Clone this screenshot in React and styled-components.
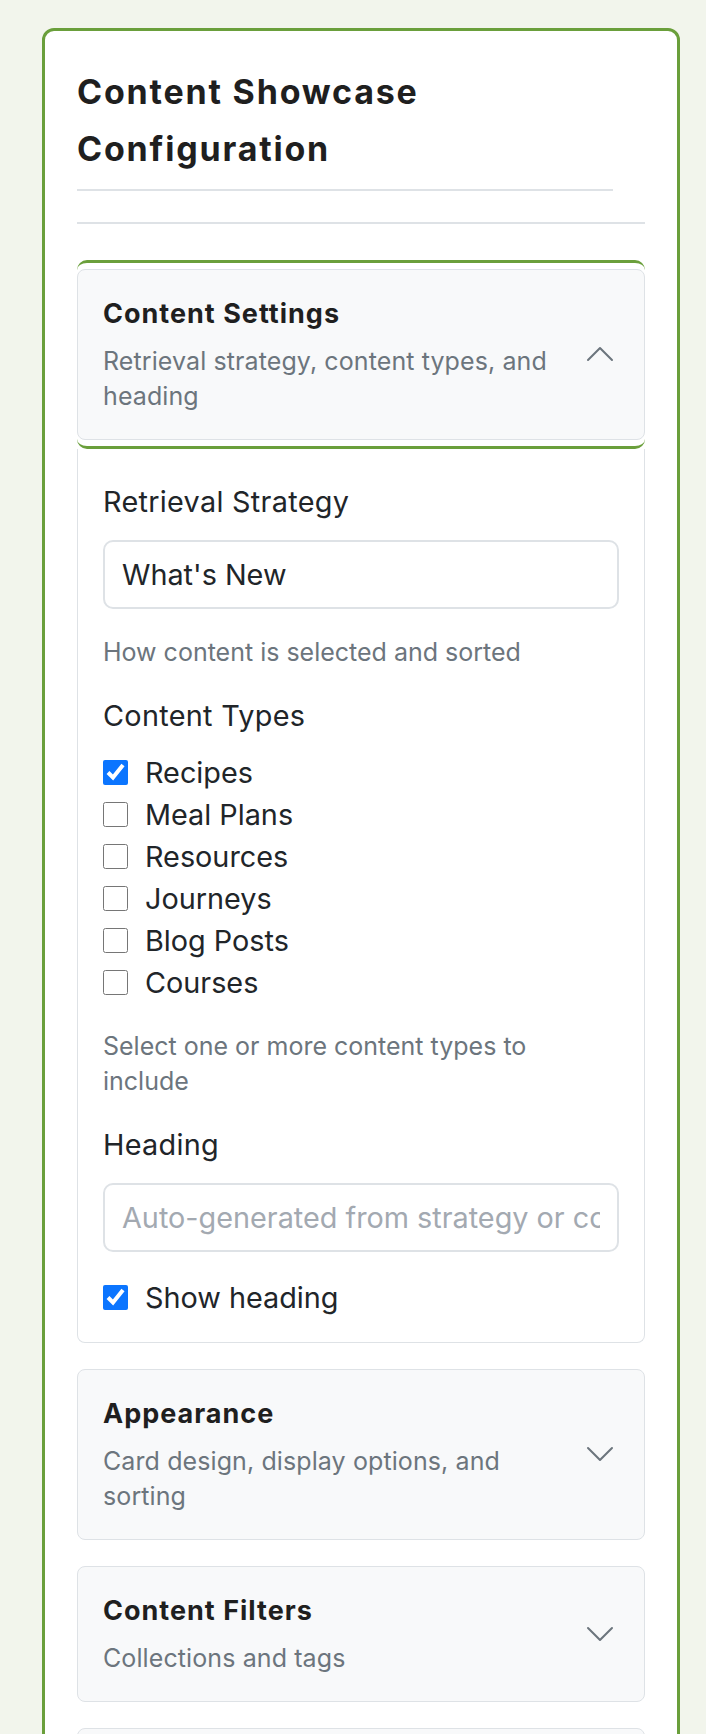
import React from 'react';
import styled, { createGlobalStyle } from 'styled-components';
import { BsChevronDown, BsChevronUp } from 'react-icons/bs';

const GlobalStyle = createGlobalStyle`
    html, body {
        margin: 0;
        padding: 0;
        background: #f2f5ec;
    }

    body {
        font-family: Inter, "Open Sans", sans-serif;
        color: #212529;
    }
`;

const Page = styled.div`
    padding: 28px 26px 40px 42px;
`;

const Card = styled.section`
    background: #fff;
    border: 3px solid #6a9f3b;
    border-radius: 12px;
    padding: 32px;
`;

const Header = styled.header`
    margin-right: 32px;
    padding-bottom: 12px;
    border-bottom: 2px solid #dee2e6;
`;

const Title = styled.h2`
    margin: 0;
    font-size: 34px;
    line-height: 57px;
    font-weight: 700;
    letter-spacing: 1.8px;
    color: #1f1f1f;
`;

const Rule = styled.hr`
    margin: 31px 0 36px;
    border: 0;
    border-top: 2px solid #dee2e6;
`;

const Stack = styled.div`
    display: flex;
    flex-direction: column;
    gap: 26px;
`;

const Ring = styled.div`
    padding: 6px 0;
    border-top: 3px solid #6a9f3b;
    border-bottom: 3px solid #6a9f3b;
    border-radius: 10px;
`;

const Toggle = styled.button`
    display: flex;
    align-items: center;
    gap: 20px;
    width: 100%;
    box-sizing: border-box;
    padding: 24px 28px 25px 25px;
    background: #f8f9fa;
    border: 1px solid #dee2e6;
    border-radius: 8px;
    text-align: left;
    font-family: inherit;
    color: #6c757d;
    cursor: pointer;
`;

const ToggleText = styled.div`
    flex: 1;
`;

const ToggleTitle = styled.div`
    font-size: 27px;
    line-height: 40px;
    font-weight: 700;
    letter-spacing: 1px;
    color: #1f1f1f;
    margin-bottom: 10px;
`;

const ToggleSub = styled.div`
    font-size: 25px;
    line-height: 35px;
    letter-spacing: 0.1px;
    color: #6c757d;
`;

const Panel = styled.div`
    display: flex;
    flex-direction: column;
    border: 1px solid #dee2e6;
    border-top: 0;
    border-radius: 0 0 8px 8px;
    padding: 31px 25px 24px;
`;

const Label = styled.label`
    font-size: 28.8px;
    line-height: 43px;
    letter-spacing: 0.3px;
    margin-top: ${p => (p.$first ? '0' : '24px')};
    margin-bottom: ${p => (p.$tight ? '0' : '17px')};
`;

const Input = styled.input`
    height: 69px;
    box-sizing: border-box;
    padding: 0 17px;
    border: 2px solid #dee2e6;
    border-radius: 10px;
    font-family: inherit;
    font-size: 28.8px;
    color: #212529;
    background: #fff;

    &::placeholder {
        color: #a3a9b1;
    }
`;

const Help = styled.div`
    margin-top: 26px;
    font-size: 25px;
    line-height: 35px;
    color: #6c757d;
`;

const CheckList = styled.div`
    margin-top: 14px;
    display: flex;
    flex-direction: column;
`;

const CheckRow = styled.label`
    display: flex;
    align-items: center;
    gap: 17px;
    height: 42px;
    font-size: 28.8px;
    margin-top: ${p => (p.$spaced ? '24px' : '0')};

    input {
        width: 25px;
        height: 25px;
        margin: 0;
        accent-color: #0b75ff;
    }
`;

const sections = [
    { title: 'Content Settings', sub: 'Retrieval strategy, content types, and heading', open: true },
    { title: 'Appearance', sub: 'Card design, display options, and sorting' },
    { title: 'Content Filters', sub: 'Collections and tags' },
    { title: 'Layout', sub: 'Columns, spacing, and pagination' },
];

const types = ['Recipes', 'Meal Plans', 'Resources', 'Journeys', 'Blog Posts', 'Courses'];

function ContentPanel() {
    return (
        <Panel>
            <Label $first>Retrieval Strategy</Label>
            <Input defaultValue="What's New" readOnly />
            <Help>How content is selected and sorted</Help>

            <Label $tight>Content Types</Label>
            <CheckList>
                {types.map((t, i) => (
                    <CheckRow key={t}>
                        <input type="checkbox" defaultChecked={i === 0} />
                        {t}
                    </CheckRow>
                ))}
            </CheckList>
            <Help>Select one or more content types to include</Help>

            <Label>Heading</Label>
            <Input placeholder="Auto-generated from strategy or content type" />
            <CheckRow $spaced>
                <input type="checkbox" defaultChecked />
                Show heading
            </CheckRow>
        </Panel>
    );
}

function Section({ title, sub, open }) {
    const toggle = (
        <Toggle type="button">
            <ToggleText>
                <ToggleTitle>{title}</ToggleTitle>
                <ToggleSub>{sub}</ToggleSub>
            </ToggleText>
            {open ? <BsChevronUp size={32} /> : <BsChevronDown size={32} />}
        </Toggle>
    );

    if (!open) return <div>{toggle}</div>;

    return (
        <div>
            <Ring>{toggle}</Ring>
            <ContentPanel />
        </div>
    );
}

export default function App() {
    return (
        <>
            <GlobalStyle />
            <Page>
                <Card>
                    <Header>
                        <Title>Content Showcase Configuration</Title>
                    </Header>
                    <Rule />
                    <Stack>
                        {sections.map(s => (
                            <Section key={s.title} {...s} />
                        ))}
                    </Stack>
                </Card>
            </Page>
        </>
    );
}
